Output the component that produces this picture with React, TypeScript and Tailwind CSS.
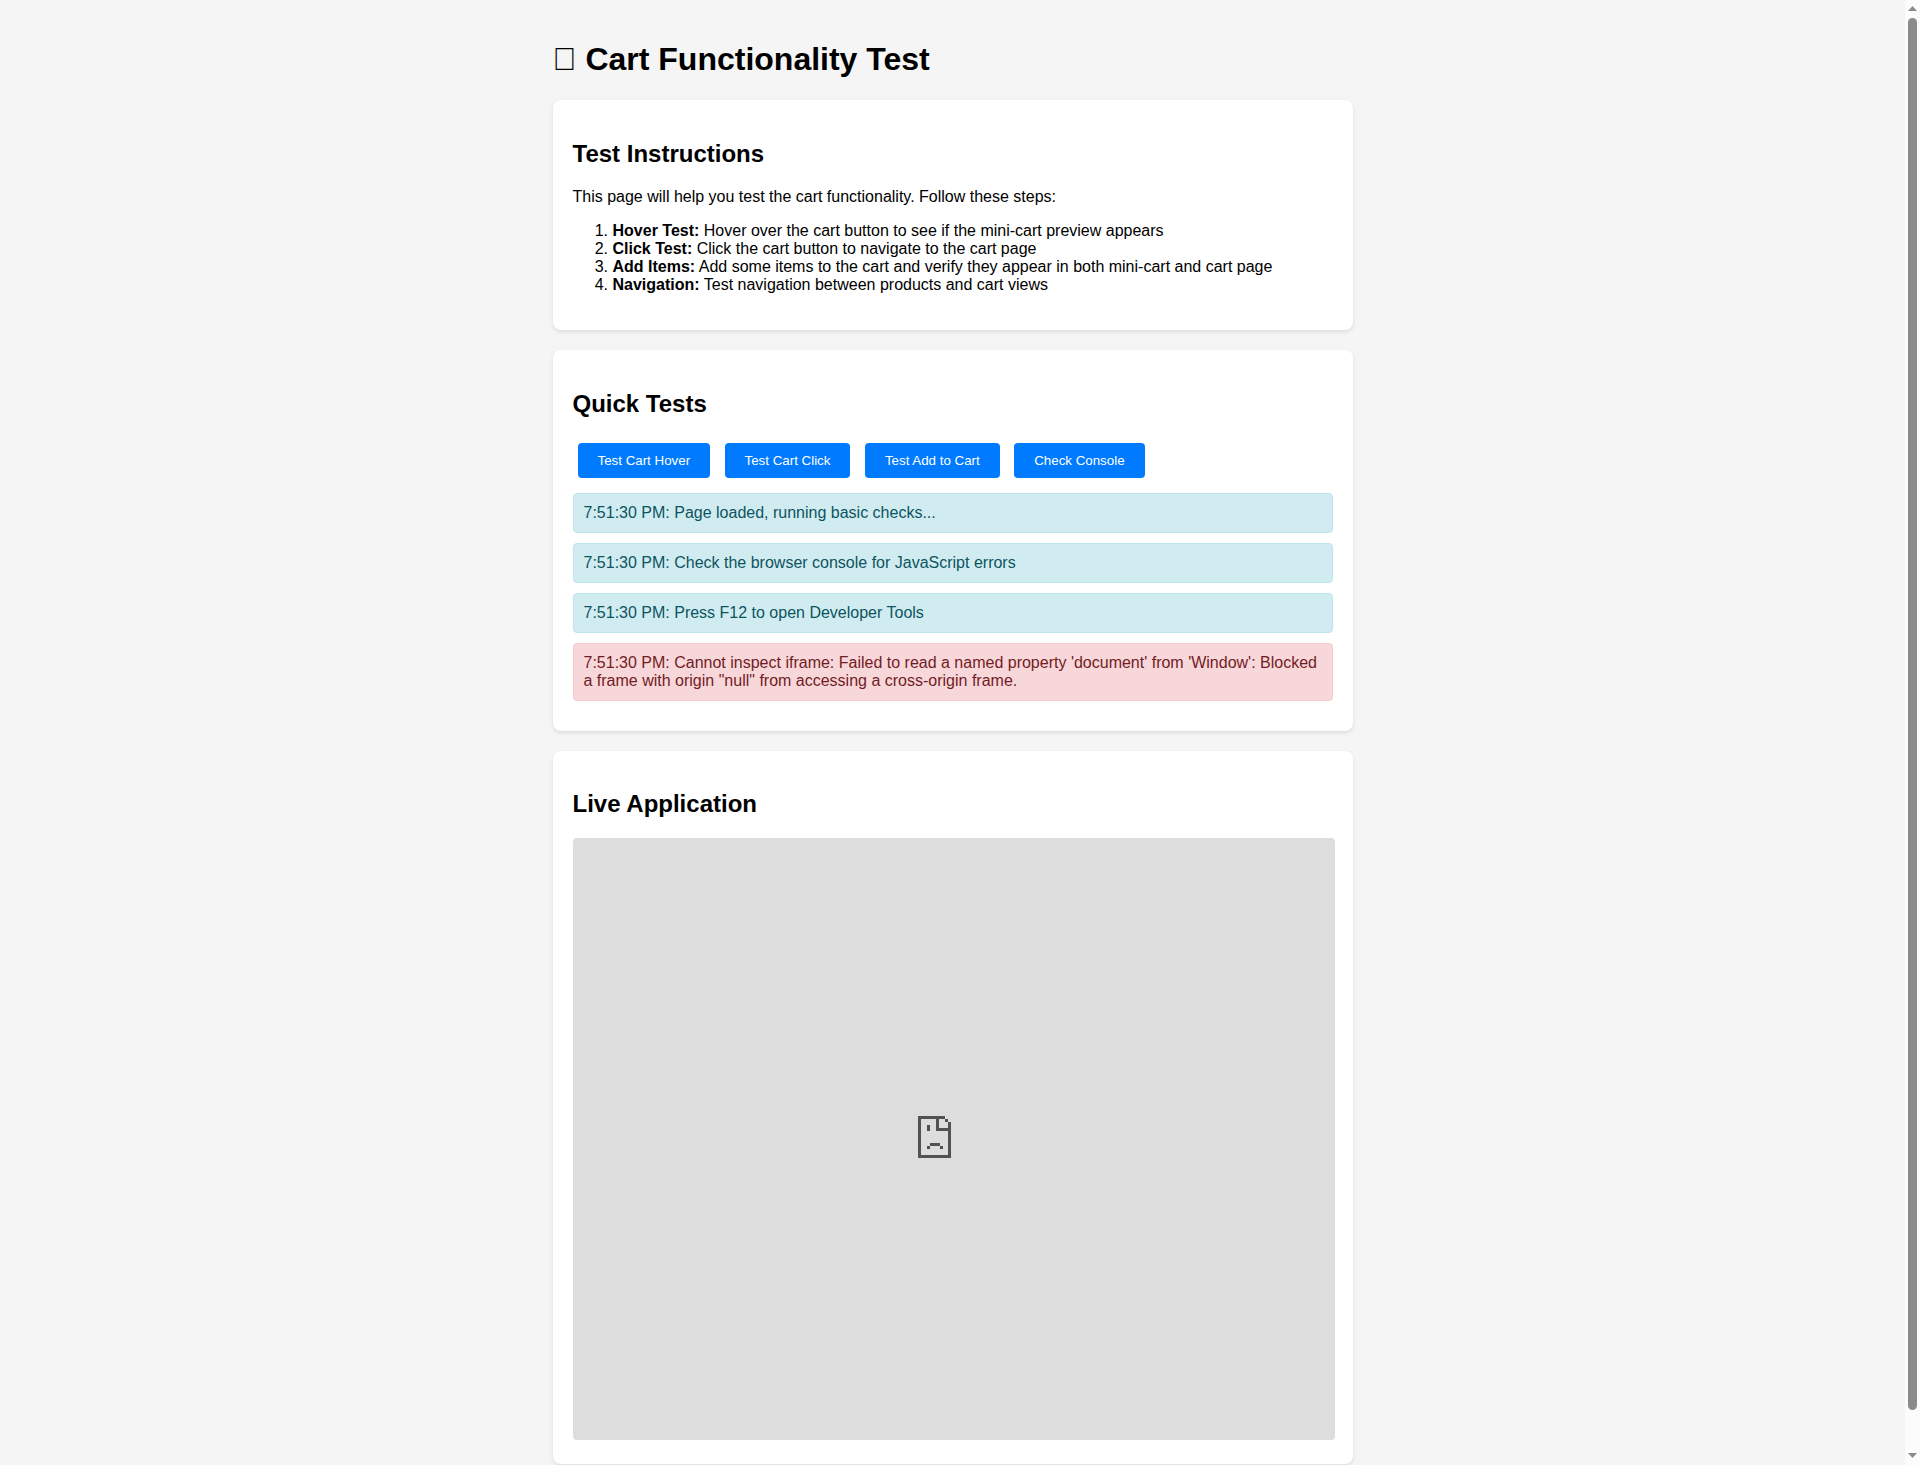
import type { ReactNode } from "react";

const STEPS = [
  ["Hover Test:", "Hover over the cart button to see if the mini-cart preview appears"],
  ["Click Test:", "Click the cart button to navigate to the cart page"],
  ["Add Items:", "Add some items to the cart and verify they appear in both mini-cart and cart page"],
  ["Navigation:", "Test navigation between products and cart views"],
];

const BUTTONS = ["Test Cart Hover", "Test Cart Click", "Test Add to Cart", "Check Console"];

const INFO = [
  "7:51:30 PM: Page loaded, running basic checks...",
  "7:51:30 PM: Check the browser console for JavaScript errors",
  "7:51:30 PM: Press F12 to open Developer Tools",
];

function Card({ title, children }: { title: string; children: ReactNode }) {
  return (
    <section className="mb-5 flow-root rounded-lg bg-white p-5 shadow-[0_2px_4px_rgba(0,0,0,0.1)]">
      <h2 className="my-[19.92px] text-[24px] leading-[normal] font-bold">{title}</h2>
      {children}
    </section>
  );
}

function SadPage() {
  return (
    <svg width="33" height="42" viewBox="0 0 33 42" fill="#525252" shapeRendering="crispEdges">
      <path d="M0 0h27v3H0zM0 3h3v36H0zM0 39h33v3H0zM30 6h3v33h-3zM27 3h3v3h-3zM18 3h3v9h-3zM18 12h12v3H18zM9 9h3v6H9zM12 27h10v3H12zM9 30h3v3H9zM22 30h3v3h-3z" />
    </svg>
  );
}

function Scrollbar() {
  return (
    <div className="flex w-[15px] shrink-0 flex-col items-center bg-[#fcfcfc] pt-1.5 pb-[7px]">
      <svg width="9" height="5" viewBox="0 0 9 5" fill="#8b8b8b">
        <path d="M4.5 0L9 5H0z" />
      </svg>
      <div className="mt-[7px] h-[1392px] w-[9px] rounded-full bg-[#8b8b8b]" />
      <svg className="mt-auto" width="9" height="5" viewBox="0 0 9 5" fill="#8b8b8b">
        <path d="M0 0h9L4.5 5z" />
      </svg>
    </div>
  );
}

export default function App() {
  return (
    <div className="flex h-[1465px] overflow-hidden bg-[#f5f5f5] font-['Liberation_Sans',Arial,sans-serif] text-[16px] leading-[normal] text-black">
      <div className="min-w-0 flex-1">
        <main className="mx-auto flow-root w-[800px] pt-5">
          <h1 className="my-[21.44px] text-[32px] leading-[normal] font-bold">{"\u{F1234}"} Cart Functionality Test</h1>
          <Card title="Test Instructions">
            <p className="my-4">This page will help you test the cart functionality. Follow these steps:</p>
            <ol className="my-4 list-decimal pl-10">
              {STEPS.map(([name, text]) => (
                <li key={name}>
                  <strong className="font-bold">{name}</strong> {text}
                </li>
              ))}
            </ol>
          </Card>
          <Card title="Quick Tests">
            <div>
              {BUTTONS.map((label) => (
                <span key={label}>
                  <button className="m-[5px] rounded-[4px] bg-[#007bff] px-5 py-2.5 text-[13.333px] leading-[normal] text-white">
                    {label}
                  </button>{" "}
                </span>
              ))}
            </div>
            <div>
              {INFO.map((text) => (
                <div key={text} className="my-2.5 rounded-[4px] border border-[#bee5eb] bg-[#d1ecf1] p-2.5 text-[#0c5460]">
                  {text}
                </div>
              ))}
              <div className="my-2.5 rounded-[4px] border border-[#f5c6cb] bg-[#f8d7da] p-2.5 text-[#721c24]">
                7:51:30 PM: Cannot inspect iframe: Failed to read a named property 'document' from 'Window': Blocked a
                frame with origin "null" from accessing a cross-origin frame.
              </div>
            </div>
          </Card>
          <Card title="Live Application">
            <div className="mb-1 h-[602px] w-[762px] rounded-[4px] bg-[#dddddd] pt-[278px] pl-[345px]">
              <SadPage />
            </div>
          </Card>
        </main>
      </div>
      <Scrollbar />
    </div>
  );
}
